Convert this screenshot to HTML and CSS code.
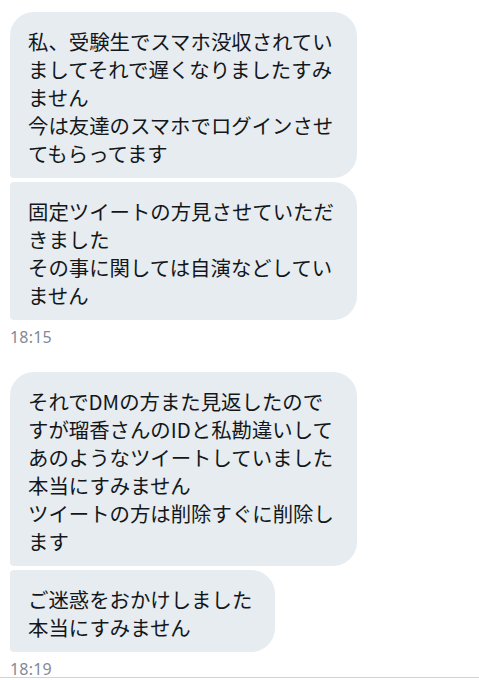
FILE: index.html
```html
<!DOCTYPE html>
<html lang="ja">
<head>
<meta charset="utf-8">
<link rel="stylesheet" href="styles.css">
</head>
<body>
<div class="thread">
  <div class="group">
    <div class="bubble first wide">私、受験生でスマホ没収されてい<br>ましてそれで遅くなりましたすみ<br>ません<br>今は友達のスマホでログインさせ<br>てもらってます</div>
    <div class="bubble wide">固定ツイートの方見させていただ<br>きました<br>その事に関しては自演などしてい<br>ません</div>
    <div class="time">18:15</div>
  </div>
  <div class="group">
    <div class="bubble first wide">それでDMの方また見返したので<br>すが瑠香さんのIDと私勘違いして<br>あのようなツイートしていました<br>本当にすみません<br>ツイートの方は削除すぐに削除し<br>ます</div>
    <div class="bubble">ご迷惑をおかけしました<br>本当にすみません</div>
    <div class="time">18:19</div>
  </div>
</div>
</body>
</html>
```

FILE: styles.css
```css
html, body {
  margin: 0;
  padding: 0;
  background: #ffffff;
}

.thread {
  width: 479px;
  height: 678px;
  box-sizing: border-box;
  padding: 12px 0 0 10px;
  border-bottom: 1px solid #d0d4d8;
}

.group {
  display: flex;
  flex-direction: column;
  align-items: flex-start;
  gap: 4px;
}

.group + .group {
  margin-top: 26px;
}

.bubble {
  background: #e6ecf0;
  color: #14171a;
  font-family: "Noto Sans CJK JP", "Noto Sans", sans-serif;
  font-size: 20.4px;
  line-height: 28px;
  padding: 15px 23px 11px 18px;
  border-radius: 4px 24px 24px 4px;
  white-space: nowrap;
  box-sizing: border-box;
  width: fit-content;
}

.bubble.first {
  border-top-left-radius: 24px;
}

.bubble.wide {
  width: 347px;
}

.time {
  font-family: "Noto Sans", "Liberation Sans", sans-serif;
  font-size: 16px;
  line-height: 18px;
  color: #7f8b97;
  margin-top: 4px;
  letter-spacing: 0.2px;
}
```
